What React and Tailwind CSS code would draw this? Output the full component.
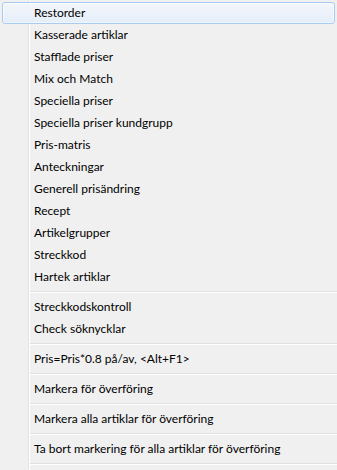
import React from 'react';

const groups = [
    [
        'Restorder',
        'Kasserade artiklar',
        'Stafflade priser',
        'Mix och Match',
        'Speciella priser',
        'Speciella priser kundgrupp',
        'Pris-matris',
        'Anteckningar',
        'Generell prisändring',
        'Recept',
        'Artikelgrupper',
        'Streckkod',
        'Hartek artiklar',
    ],
    ['Streckkodskontroll', 'Check söknycklar'],
    ['Pris=Pris*0.8 på/av, <Alt+F1>'],
    ['Markera för överföring'],
    ['Markera alla artiklar för överföring'],
    ['Ta bort markering för alla artiklar för överföring'],
];

const Separator = () => (
    <div className="h-[8px] flex flex-col justify-center pl-[30px]">
        <div className="h-px bg-[#e0e0e0]" />
        <div className="h-px bg-white" />
    </div>
);

const MenuItem = ({ label, active }) => {
    if (active) {
        return (
            <div className="mx-[2px] h-[22px] flex items-center pl-[31px] rounded-[3px] border border-[#a8cbf3] bg-[linear-gradient(to_bottom,#f4f7fbe6,#e3edfbe6)] shadow-[inset_0_0_0_1px_#ffffff80]">
                {label}
            </div>
        );
    }
    return <div className="h-[22px] flex items-center pl-[34px]">{label}</div>;
};

export default function App() {
    return (
        <div
            className="w-[337px] h-[470px] overflow-hidden pt-[2px] text-[12px] text-black bg-[linear-gradient(to_right,#f0f0f0_28px,#e2e3e3_28px,#e2e3e3_29px,#ffffff_29px,#ffffff_30px,#f0f0f0_30px)]"
            style={{ fontFamily: 'Lato, "Noto Sans", sans-serif' }}
        >
            {groups.map((items, g) => (
                <div key={g}>
                    {items.map((label, i) => (
                        <MenuItem key={label} label={label} active={g === 0 && i === 0} />
                    ))}
                    <Separator />
                </div>
            ))}
        </div>
    );
}
